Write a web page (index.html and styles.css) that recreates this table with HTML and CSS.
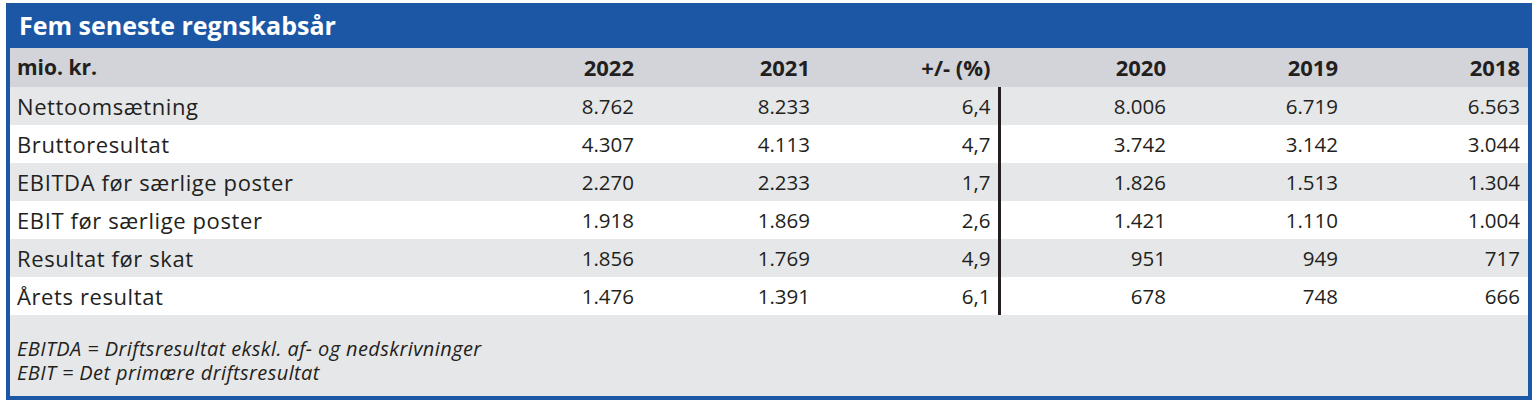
FILE: index.html
```html
<!DOCTYPE html>
<html lang="da">
<head>
<meta charset="utf-8">
<title>Fem seneste regnskabsår</title>
<link rel="stylesheet" href="styles.css">
</head>
<body>
<section class="box">
  <h1 class="title">Fem seneste regnskabsår</h1>
  <table class="fin">
    <colgroup>
      <col class="c-label">
      <col class="c-a">
      <col class="c-b">
      <col class="c-pct">
      <col class="c-d">
      <col class="c-e">
      <col class="c-f">
    </colgroup>
    <thead>
      <tr><th class="lbl">mio. kr.</th><th>2022</th><th>2021</th><th class="pct">+/- (%)</th><th>2020</th><th>2019</th><th>2018</th></tr>
    </thead>
    <tbody>
      <tr><td class="lbl">Nettoomsætning</td><td>8.762</td><td>8.233</td><td class="pct sep">6,4</td><td>8.006</td><td>6.719</td><td>6.563</td></tr>
      <tr><td class="lbl">Bruttoresultat</td><td>4.307</td><td>4.113</td><td class="pct sep">4,7</td><td>3.742</td><td>3.142</td><td>3.044</td></tr>
      <tr><td class="lbl">EBITDA før særlige poster</td><td>2.270</td><td>2.233</td><td class="pct sep">1,7</td><td>1.826</td><td>1.513</td><td>1.304</td></tr>
      <tr><td class="lbl">EBIT før særlige poster</td><td>1.918</td><td>1.869</td><td class="pct sep">2,6</td><td>1.421</td><td>1.110</td><td>1.004</td></tr>
      <tr><td class="lbl">Resultat før skat</td><td>1.856</td><td>1.769</td><td class="pct sep">4,9</td><td>951</td><td>949</td><td>717</td></tr>
      <tr><td class="lbl">Årets resultat</td><td>1.476</td><td>1.391</td><td class="pct sep">6,1</td><td>678</td><td>748</td><td>666</td></tr>
    </tbody>
  </table>
  <div class="notes">
    <p>EBITDA = Driftsresultat ekskl. af- og nedskrivninger</p>
    <p>EBIT = Det primære driftsresultat</p>
  </div>
</section>
</body>
</html>
```

FILE: styles.css
```css
html, body {
  margin: 0;
  padding: 0;
  background: #ffffff;
}

body {
  padding: 3px 0 0 6px;
  font-family: "Open Sans", "DejaVu Sans", sans-serif;
  color: #231f20;
}

.box {
  width: 1526px;
  box-sizing: border-box;
  border: 4px solid #1c57a5;
  border-top: 0;
  background: #e6e7e9;
}

.title {
  margin: 0 -4px;
  height: 45px;
  padding: 0 0 0 13px;
  background: #1c57a5;
  color: #ffffff;
  font-size: 25px;
  font-weight: 700;
  line-height: 45px;
}

.fin {
  width: 100%;
  border-collapse: collapse;
  table-layout: fixed;
  font-size: 20.5px;
}

.c-label { width: auto; }
.c-a { width: 176px; }
.c-b { width: 176px; }
.c-pct { width: 181px; }
.c-d { width: 175px; }
.c-e { width: 172px; }
.c-f { width: 182px; }

.fin th,
.fin td {
  padding: 0 8px 0 7px;
  text-align: right;
  white-space: nowrap;
  line-height: 38px;
  height: 38px;
}

.fin th {
  font-weight: 700;
  font-size: 22px;
  background: #d2d4d9;
  height: 39px;
  line-height: 39px;
}

.fin th.lbl {
  font-size: 21px;
}

.fin td.lbl {
  font-size: 22px;
  letter-spacing: 0.6px;
}

.fin .lbl {
  text-align: left;
}

.fin tbody tr:nth-child(odd) td {
  background: #e6e7e9;
}

.fin tbody tr:nth-child(even) td {
  background: #ffffff;
}

.fin td.sep {
  border-right: 3px solid #231f20;
  padding-right: 7px;
}

.fin th.pct {
  border-right: 3px solid transparent;
  padding-right: 7px;
}

.notes {
  padding: 22px 0 11px 7px;
  font-style: italic;
  font-size: 20px;
  letter-spacing: 0.4px;
  line-height: 24px;
}

.notes p {
  margin: 0;
}
```
